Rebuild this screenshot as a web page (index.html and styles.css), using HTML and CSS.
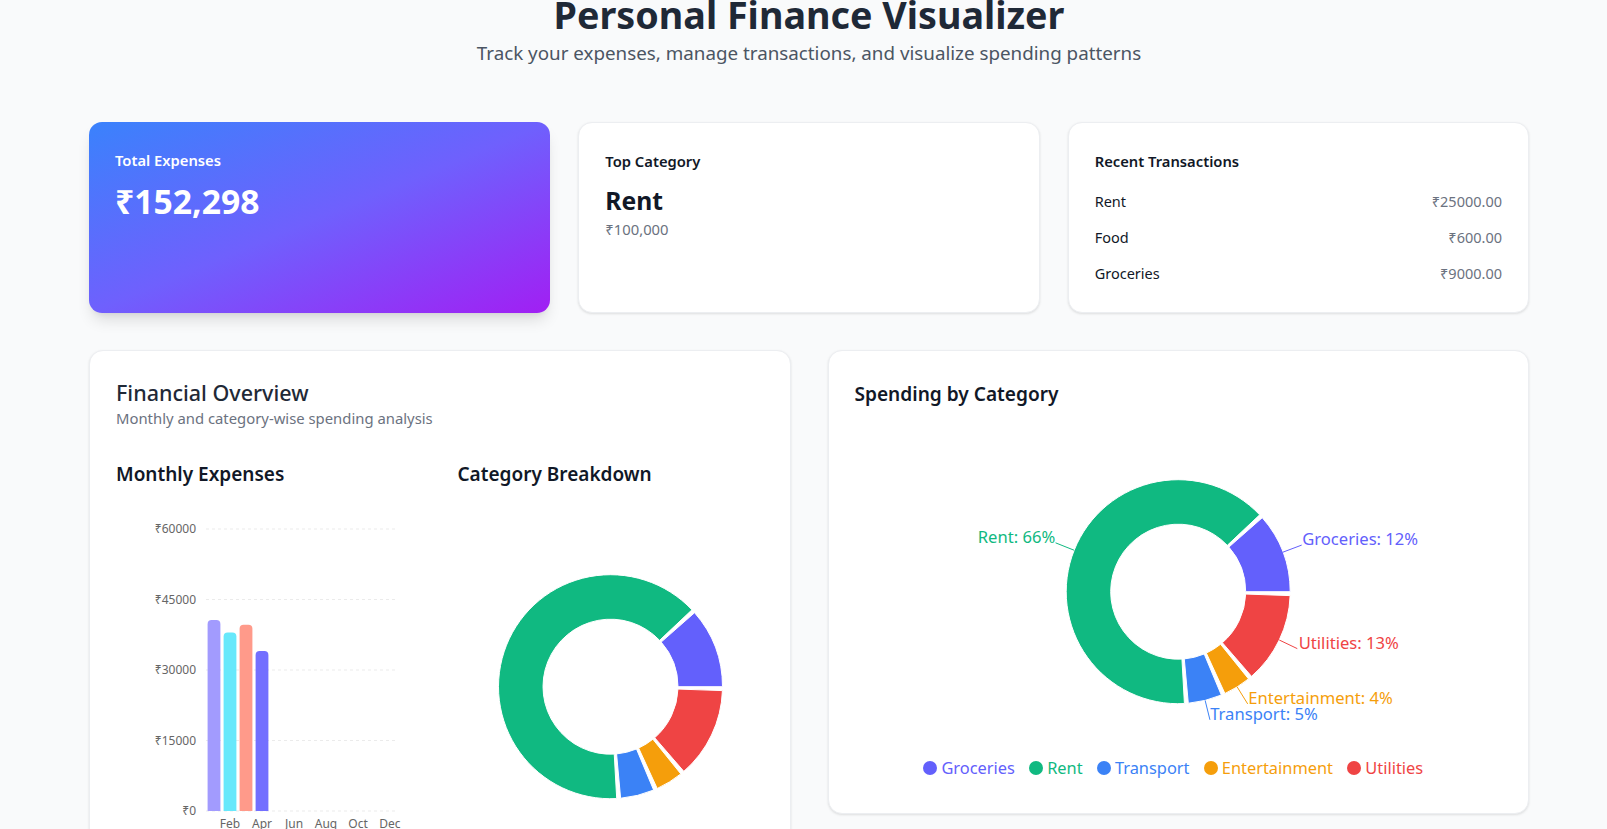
FILE: index.html
```html
<!DOCTYPE html>
<html lang="en">
<head>
<meta charset="utf-8">
<title>Personal Finance Visualizer</title>
<link rel="stylesheet" href="styles.css">
</head>
<body>
<div class="page">
  <header class="hero">
    <h1>Personal Finance Visualizer</h1>
    <p>Track your expenses, manage transactions, and visualize spending patterns</p>
  </header>

  <section class="stats">
    <div class="stat stat-total">
      <div class="stat-label">Total Expenses</div>
      <div class="total-value">₹152,298</div>
    </div>
    <div class="stat card">
      <div class="stat-label">Top Category</div>
      <div class="top-name">Rent</div>
      <div class="top-amount">₹100,000</div>
    </div>
    <div class="stat card">
      <div class="stat-label">Recent Transactions</div>
      <ul class="tx-list">
        <li><span>Rent</span><span class="amt">₹25000.00</span></li>
        <li><span>Food</span><span class="amt">₹600.00</span></li>
        <li><span>Groceries</span><span class="amt">₹9000.00</span></li>
      </ul>
    </div>
  </section>

  <section class="panels">
    <div class="card panel">
      <h2 class="overview-title">Financial Overview</h2>
      <p class="sub">Monthly and category-wise spending analysis</p>
      <div class="overview-grid">
        <div class="chart-col">
          <h3 class="chart-title">Monthly Expenses</h3>
          <svg class="chart-svg" width="308" height="360" viewBox="0 0 308 360">
            <g class="grid">
              <line x1="90" y1="29" x2="282" y2="29"/>
              <line x1="90" y1="99.5" x2="282" y2="99.5"/>
              <line x1="90" y1="170" x2="282" y2="170"/>
              <line x1="90" y1="240.5" x2="282" y2="240.5"/>
              <line x1="90" y1="311" x2="282" y2="311"/>
            </g>
            <g class="axis" text-anchor="end">
              <text x="80" y="33.2">₹60000</text>
              <text x="80" y="103.7">₹45000</text>
              <text x="80" y="174.2">₹30000</text>
              <text x="80" y="244.7">₹15000</text>
              <text x="80" y="315.2">₹0</text>
            </g>
            <path fill="#a29bfe" d="M91.6,311 L91.6,124 A4,4 0 0 1 95.6,120 L100.4,120 A4,4 0 0 1 104.4,124 L104.4,311 Z"/>
            <path fill="#67e8fb" d="M107.6,311 L107.6,136.5 A4,4 0 0 1 111.6,132.5 L116.4,132.5 A4,4 0 0 1 120.4,136.5 L120.4,311 Z"/>
            <path fill="#ff9a8a" d="M123.6,311 L123.6,128.7 A4,4 0 0 1 127.6,124.7 L132.4,124.7 A4,4 0 0 1 136.4,128.7 L136.4,311 Z"/>
            <path fill="#736fff" d="M139.6,311 L139.6,155 A4,4 0 0 1 143.6,151 L148.4,151 A4,4 0 0 1 152.4,155 L152.4,311 Z"/>
            <g class="axis" text-anchor="middle">
              <text x="114" y="327.5">Feb</text>
              <text x="146" y="327.5">Apr</text>
              <text x="178" y="327.5">Jun</text>
              <text x="210" y="327.5">Aug</text>
              <text x="242" y="327.5">Oct</text>
              <text x="274" y="327.5">Dec</text>
            </g>
          </svg>
        </div>
        <div class="chart-col">
          <h3 class="chart-title">Category Breakdown</h3>
          <svg class="chart-svg" width="306" height="360" viewBox="0 0 306 360">
            <g transform="translate(152.5,186.7)" stroke="#fff" stroke-width="1">
              <path fill="#6360fc" d="M112,0 A112,112 0 0 0 84.07,-74.00 L50.67,-44.60 A67.5,67.5 0 0 1 67.5,0 Z"/>
              <path fill="#10b981" d="M81.46,-76.87 A112,112 0 1 0 6.21,111.83 L3.74,67.40 A67.5,67.5 0 1 1 49.09,-46.33 Z"/>
              <path fill="#3b82f6" d="M10.11,111.54 A112,112 0 0 0 43.13,103.36 L25.99,62.29 A67.5,67.5 0 0 1 6.09,67.22 Z"/>
              <path fill="#f59e0b" d="M46.71,101.80 A112,112 0 0 0 70.31,87.18 L42.37,52.54 A67.5,67.5 0 0 1 28.15,61.35 Z"/>
              <path fill="#ef4444" d="M73.32,84.66 A112,112 0 0 0 111.93,3.91 L67.46,2.36 A67.5,67.5 0 0 1 44.19,51.03 Z"/>
            </g>
          </svg>
        </div>
      </div>
    </div>

    <div class="card panel spending">
      <h2 class="spend-title">Spending by Category</h2>
      <svg class="pie-svg" width="647" height="336" viewBox="0 0 647 336">
        <g transform="translate(323.2,171.7)">
          <g stroke="#fff" stroke-width="1">
            <path fill="#6360fc" d="M112,0 A112,112 0 0 0 84.07,-74.00 L50.67,-44.60 A67.5,67.5 0 0 1 67.5,0 Z"/>
            <path fill="#10b981" d="M81.46,-76.87 A112,112 0 1 0 6.21,111.83 L3.74,67.40 A67.5,67.5 0 1 1 49.09,-46.33 Z"/>
            <path fill="#3b82f6" d="M10.11,111.54 A112,112 0 0 0 43.13,103.36 L25.99,62.29 A67.5,67.5 0 0 1 6.09,67.22 Z"/>
            <path fill="#f59e0b" d="M46.71,101.80 A112,112 0 0 0 70.31,87.18 L42.37,52.54 A67.5,67.5 0 0 1 28.15,61.35 Z"/>
            <path fill="#ef4444" d="M73.32,84.66 A112,112 0 0 0 111.93,3.91 L67.46,2.36 A67.5,67.5 0 0 1 44.19,51.03 Z"/>
          </g>
          <g fill="none" stroke-width="1">
            <line stroke="#6360fc" x1="104.78" y1="-39.55" x2="123.49" y2="-46.62"/>
            <line stroke="#10b981" x1="-104.05" y1="-41.46" x2="-122.63" y2="-48.86"/>
            <line stroke="#3b82f6" x1="26.93" y1="108.71" x2="31.74" y2="128.13"/>
            <line stroke="#f59e0b" x1="58.97" y1="95.22" x2="69.50" y2="112.23"/>
            <line stroke="#ef4444" x1="101.05" y1="48.31" x2="119.09" y2="56.94"/>
          </g>
          <g class="pie-label">
            <text fill="#6360fc" x="124" y="-46.6">Groceries: 12%</text>
            <text fill="#10b981" x="-123" y="-48.9" text-anchor="end">Rent: 66%</text>
            <text fill="#3b82f6" x="32" y="128.1">Transport: 5%</text>
            <text fill="#f59e0b" x="70" y="112.2">Entertainment: 4%</text>
            <text fill="#ef4444" x="120.5" y="56.9">Utilities: 13%</text>
          </g>
        </g>
      </svg>
      <ul class="legend">
        <li class="c-groc"><svg class="dot" width="14" height="14" viewBox="0 0 14 14"><circle cx="7" cy="7" r="7" fill="currentColor"/></svg>Groceries</li>
        <li class="c-rent"><svg class="dot" width="14" height="14" viewBox="0 0 14 14"><circle cx="7" cy="7" r="7" fill="currentColor"/></svg>Rent</li>
        <li class="c-trans"><svg class="dot" width="14" height="14" viewBox="0 0 14 14"><circle cx="7" cy="7" r="7" fill="currentColor"/></svg>Transport</li>
        <li class="c-ent"><svg class="dot" width="14" height="14" viewBox="0 0 14 14"><circle cx="7" cy="7" r="7" fill="currentColor"/></svg>Entertainment</li>
        <li class="c-util"><svg class="dot" width="14" height="14" viewBox="0 0 14 14"><circle cx="7" cy="7" r="7" fill="currentColor"/></svg>Utilities</li>
      </ul>
    </div>
  </section>
</div>
</body>
</html>
```

FILE: styles.css
```css
* { box-sizing: border-box; }

html, body {
  margin: 0;
  padding: 0;
}

body {
  background: #f9fafb;
  font-family: "Noto Sans", "Open Sans", sans-serif;
  color: #111827;
  overflow: hidden;
}

.page {
  width: 1440px;
  margin-left: 89px;
}

/* Header */
.hero {
  text-align: center;
  margin-bottom: 55px;
}

.hero h1 {
  margin: -8px 0 1px;
  font-size: 37.7px;
  line-height: 46px;
  font-weight: 700;
  color: #1f2937;
}

.hero p {
  margin: 0;
  font-size: 18.8px;
  line-height: 28px;
  color: #4b5563;
}

/* Stat cards */
.stats {
  display: grid;
  grid-template-columns: repeat(3, minmax(0, 1fr));
  gap: 28px;
  margin-bottom: 37px;
}

.card {
  background: #fff;
  border: 1px solid #eceef1;
  border-radius: 14px;
  box-shadow: 0 1px 3px rgba(0, 0, 0, 0.08), 0 1px 2px rgba(0, 0, 0, 0.04);
}

.stat {
  padding: 27px 26px;
}

.stat-total {
  border-radius: 13px;
  background: linear-gradient(to bottom right, #3a82fc 0%, #6f60fd 50%, #a11ff3 100%);
  box-shadow: 0 10px 15px -3px rgba(0, 0, 0, 0.12), 0 4px 6px -4px rgba(0, 0, 0, 0.1);
  color: #fff;
}

.stat-label {
  font-size: 14.75px;
  line-height: 22px;
  font-weight: 600;
}

.total-value {
  margin-top: 10px;
  font-size: 33.7px;
  line-height: 40px;
  font-weight: 700;
}

.top-name {
  margin-top: 12.5px;
  font-size: 24.7px;
  line-height: 32px;
  font-weight: 700;
  color: #111827;
}

.top-amount {
  margin-top: 2px;
  font-size: 14.8px;
  line-height: 20px;
  color: #6b7280;
}

.tx-list {
  list-style: none;
  margin: 17px 0 0;
  padding: 0;
  display: flex;
  flex-direction: column;
  gap: 12px;
}

.tx-list li {
  display: flex;
  justify-content: space-between;
  font-size: 14.5px;
  line-height: 24px;
  color: #111827;
}

.tx-list .amt {
  color: #6b7280;
}

/* Panels */
.panels {
  display: grid;
  grid-template-columns: minmax(0, 1fr) minmax(0, 1fr);
  gap: 37px;
  align-items: start;
}

.panel {
  padding: 28px 26px;
}

.overview-title {
  margin: 0;
  font-size: 21.5px;
  line-height: 28px;
  font-weight: 500;
  color: #1f2937;
}

.sub {
  margin: 1px 0 0;
  font-size: 14.85px;
  line-height: 20px;
  color: #6b7280;
}

.overview-grid {
  display: grid;
  grid-template-columns: 309.5px 306px;
  column-gap: 32px;
  margin-top: 32px;
}

.chart-title {
  margin: 0;
  font-size: 19px;
  line-height: 28px;
  font-weight: 600;
  color: #111827;
}

.chart-svg {
  display: block;
  margin-top: 12px;
}

.grid line {
  stroke: #ebebeb;
  stroke-dasharray: 3 3;
  stroke-width: 1;
}

.axis {
  font-size: 12px;
  fill: #666;
}

.spending {
  padding-bottom: 33px;
}

.spend-title {
  margin: 1px 0 0;
  font-size: 19.1px;
  line-height: 28px;
  font-weight: 600;
  color: #111827;
}

.pie-svg {
  display: block;
  margin-top: 12px;
}

.pie-label {
  font-size: 16.6px;
}

.legend {
  list-style: none;
  margin: 0;
  padding: 0;
  text-align: center;
  font-size: 16.4px;
  line-height: 24px;
}

.legend li {
  display: inline-block;
  margin-right: 10px;
}

.legend .dot {
  display: inline-block;
  vertical-align: middle;
  margin-right: 4px;
  margin-top: -4px;
}

.c-groc { color: #6360fc; }
.c-rent { color: #10b981; }
.c-trans { color: #3b82f6; }
.c-ent { color: #f59e0b; }
.c-util { color: #ef4444; }
```
